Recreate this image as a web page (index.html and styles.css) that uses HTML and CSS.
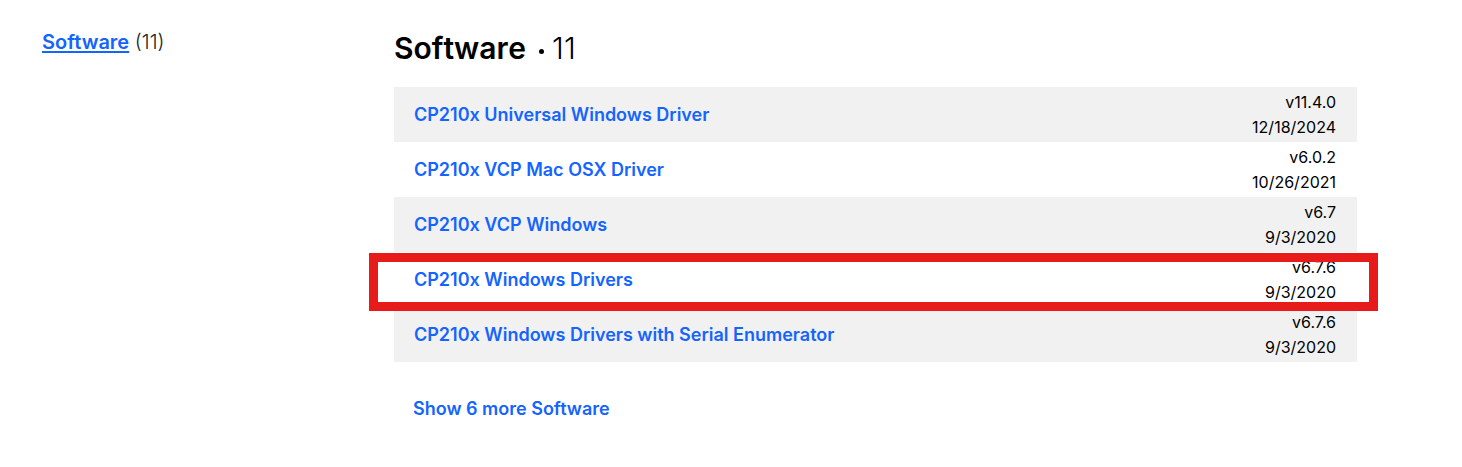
FILE: index.html
```html
<!DOCTYPE html>
<html lang="en">
<head>
<meta charset="utf-8">
<title>Software</title>
<link rel="stylesheet" href="styles.css">
</head>
<body>
<div class="page">
  <nav class="sidebar"><a href="#software">Software</a> <span class="tally">(11)</span></nav>
  <main class="content" id="software">
    <h1 class="title">Software <span class="dot"></span><span class="total">11</span></h1>
    <ul class="list">
      <li class="item"><a href="#d1">CP210x Universal Windows Driver</a><div class="meta"><div>v11.4.0</div><div>12/18/2024</div></div></li>
      <li class="item"><a href="#d2">CP210x VCP Mac OSX Driver</a><div class="meta"><div>v6.0.2</div><div>10/26/2021</div></div></li>
      <li class="item"><a href="#d3">CP210x VCP Windows</a><div class="meta"><div>v6.7</div><div>9/3/2020</div></div></li>
      <li class="item marked"><a href="#d4">CP210x Windows Drivers</a><div class="meta"><div>v6.7.6</div><div>9/3/2020</div></div></li>
      <li class="item"><a href="#d5">CP210x Windows Drivers with Serial Enumerator</a><div class="meta"><div>v6.7.6</div><div>9/3/2020</div></div></li>
    </ul>
    <button class="more" type="button">Show 6 more Software</button>
  </main>
</div>
</body>
</html>
```
FILE: styles.css
```css
* { box-sizing: border-box; }
body {
  margin: 0;
  background: #fff;
  color: #000;
  font-family: Inter, "Liberation Sans", sans-serif;
}
a { color: #1464ff; }
.page {
  display: grid;
  grid-template-columns: 352px 1fr;
  padding: 28px 105px 28px 42px;
}
.sidebar { font-size: 20px; line-height: 28px; }
.sidebar a {
  font-weight: 600;
  text-decoration-thickness: 2px;
  text-underline-offset: 2px;
}
.tally { color: #222; font-weight: 300; }
.title {
  display: flex;
  align-items: center;
  margin: 0 0 19px;
  font-size: 30px;
  line-height: 40px;
  font-weight: 600;
  font-kerning: none;
}
.dot {
  width: 5px;
  height: 5px;
  margin: 6px 8px 0 13px;
  border-radius: 50%;
  background: #000;
}
.total { font-weight: 300; }
.list { margin: 0; padding: 0; list-style: none; }
.item {
  position: relative;
  display: flex;
  align-items: center;
  justify-content: space-between;
  height: 55px;
  padding: 0 21px 0 20px;
}
.item:nth-child(odd) { background: #f1f1f1; }
.item a {
  font-size: 18px;
  font-weight: 600;
  text-decoration: none;
}
.meta {
  font-size: 16px;
  line-height: 25px;
  text-align: right;
}
.marked::after {
  content: "";
  position: absolute;
  z-index: 1;
  inset: 1px -21px -4px -25px;
  border: 9px solid #e81b1b;
  pointer-events: none;
}
.more {
  margin: 34px 0 0;
  padding: 0 19px;
  border: 0;
  background: none;
  color: #1464ff;
  font: 600 18px/26px Inter, "Liberation Sans", sans-serif;
}
```
